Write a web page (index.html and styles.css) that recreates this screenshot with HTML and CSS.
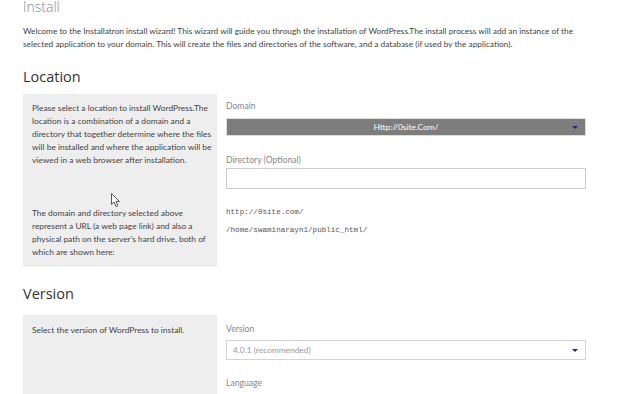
FILE: index.html
```html
<!DOCTYPE html>
<html lang="en">
  <head>
    <meta charset="UTF-8" />
    <title>Install WordPress</title>
    <link rel="stylesheet" href="styles.css">
  </head>
  <body>
    <div class="page">
      <h1 class="page-title">Install</h1>
      <p class="intro">
        Welcome to the Installatron install wizard! This wizard will guide you through the installation of WordPress.The install process will add an instance of the<br>
        selected application to your domain. This will create the files and directories of the software, and a database (if used by the application).
      </p>

      <h2 class="section-title">Location</h2>
      <div class="section">
        <div class="help">
          <p class="help-top">Please select a location to install WordPress.The<br>location is a combination of a domain and a<br>directory that together determine where the files<br>will be installed and where the application will be<br>viewed in a web browser after installation.</p>
          <p class="help-bottom">The domain and directory selected above<br>represent a URL (a web page link) and also a<br>physical path on the server's hard drive, both of<br>which are shown here:</p>
        </div>
        <div class="fields">
          <label class="field-label">Domain</label>
          <div class="select select-dark">
            <span class="select-value">Http://0site.Com/</span>
            <span class="caret"></span>
          </div>
          <label class="field-label label-dir">Directory (Optional)</label>
          <div class="input"></div>
          <div class="paths">
            <div class="path">http://0site.com/</div>
            <div class="path">/home/swaminarayn1/public_html/</div>
          </div>
        </div>
      </div>

      <h2 class="section-title version-title">Version</h2>
      <div class="section section-version">
        <div class="help help-short">
          <p>Select the version of WordPress to install.</p>
        </div>
        <div class="fields fields-version">
          <label class="field-label">Version</label>
          <div class="select select-tall">
            <span class="select-value">4.0.1 (recommended)</span>
            <span class="caret"></span>
          </div>
          <label class="field-label label-lang">Language</label>
          <div class="select select-tall"></div>
        </div>
      </div>
    </div>

    <!-- mouse pointer captured in the screenshot -->
    <svg class="cursor" width="10" height="15" viewBox="0 0 10 15">
      <path d="M0.5 0.5 L0.5 11.5 L3 9 L5 13.5 L6.8 12.7 L4.9 8.4 L8.3 8.4 Z" fill="#fff" stroke="#444" stroke-width="0.9" />
    </svg>
  </body>
</html>
```

FILE: styles.css
```css
html,
body {
  margin: 0;
  padding: 0;
  background: #fff;
  overflow: hidden;
  height: 394px;
}
body {
  font-family: "Lato", "Open Sans", sans-serif;
  color: #444;
  font-size: 8.4px;
}
.page {
  width: 563px;
  padding: 0 0 0 23px;
  margin-top: -2px;
}
.page-title {
  margin: 0;
  font-family: "Open Sans", sans-serif;
  font-size: 14px;
  font-weight: 300;
  color: #8b8597;
  line-height: 18px;
}
.intro {
  margin: 9px 0 0;
  font-size: 8.3px;
  line-height: 13px;
  color: #444;
  white-space: nowrap;
}
.section-title {
  margin: 17px 0 0;
  font-family: "Open Sans", sans-serif;
  font-size: 14.5px;
  font-weight: 400;
  color: #333;
  line-height: 18px;
}
.version-title {
  margin-top: 18px;
}
.section {
  display: flex;
  margin-top: 8px;
}
.section-version {
  margin-top: 12px;
}
.help {
  width: 176px;
  flex: none;
  background: #eeeeee;
  padding: 8px 9px 0 9px;
  display: flex;
  flex-direction: column;
}
.help p {
  margin: 0;
  font-size: 8.4px;
  line-height: 13px;
  color: #444;
  white-space: nowrap;
}
.help-bottom {
  padding-top: 40px;
  padding-bottom: 8px;
}
.help-short {
  padding-top: 9px;
}
.fields {
  flex: 1;
  padding: 6px 0 0 9px;
  display: flex;
  flex-direction: column;
}
.fields-version {
  padding-top: 8px;
}
.field-label {
  font-size: 8.6px;
  color: #888;
  line-height: 12px;
}
.label-dir {
  margin-top: 18px;
}
.label-lang {
  margin-top: 17px;
}
.select {
  position: relative;
  height: 18px;
  margin-top: 5px;
  border: 1px solid #d4d4d4;
  background: #fff;
  display: flex;
  align-items: center;
  padding: 0 6px;
  box-sizing: border-box;
}
.select-tall {
  height: 20px;
}
.select-dark {
  background: #7d7d7d;
  border-color: #dcdcdc;
  justify-content: center;
  margin-top: 6px;
}
.select-value {
  font-size: 8.4px;
  color: #999;
}
.select-dark .select-value {
  color: #fff;
}
.caret {
  position: absolute;
  right: 7px;
  top: 50%;
  margin-top: -1px;
  width: 0;
  height: 0;
  border-left: 3px solid transparent;
  border-right: 3px solid transparent;
  border-top: 3px solid #1b2a7a;
}
.input {
  height: 21px;
  margin-top: 2px;
  border: 1px solid #ccc;
  box-sizing: border-box;
  background: #fff;
}
.paths {
  padding-top: 14px;
}
.path {
  font-family: "Liberation Mono", "DejaVu Sans Mono", monospace;
  font-size: 7.6px;
  color: #555;
  line-height: 18px;
}
.cursor {
  position: absolute;
  left: 111px;
  top: 193px;
}
```
